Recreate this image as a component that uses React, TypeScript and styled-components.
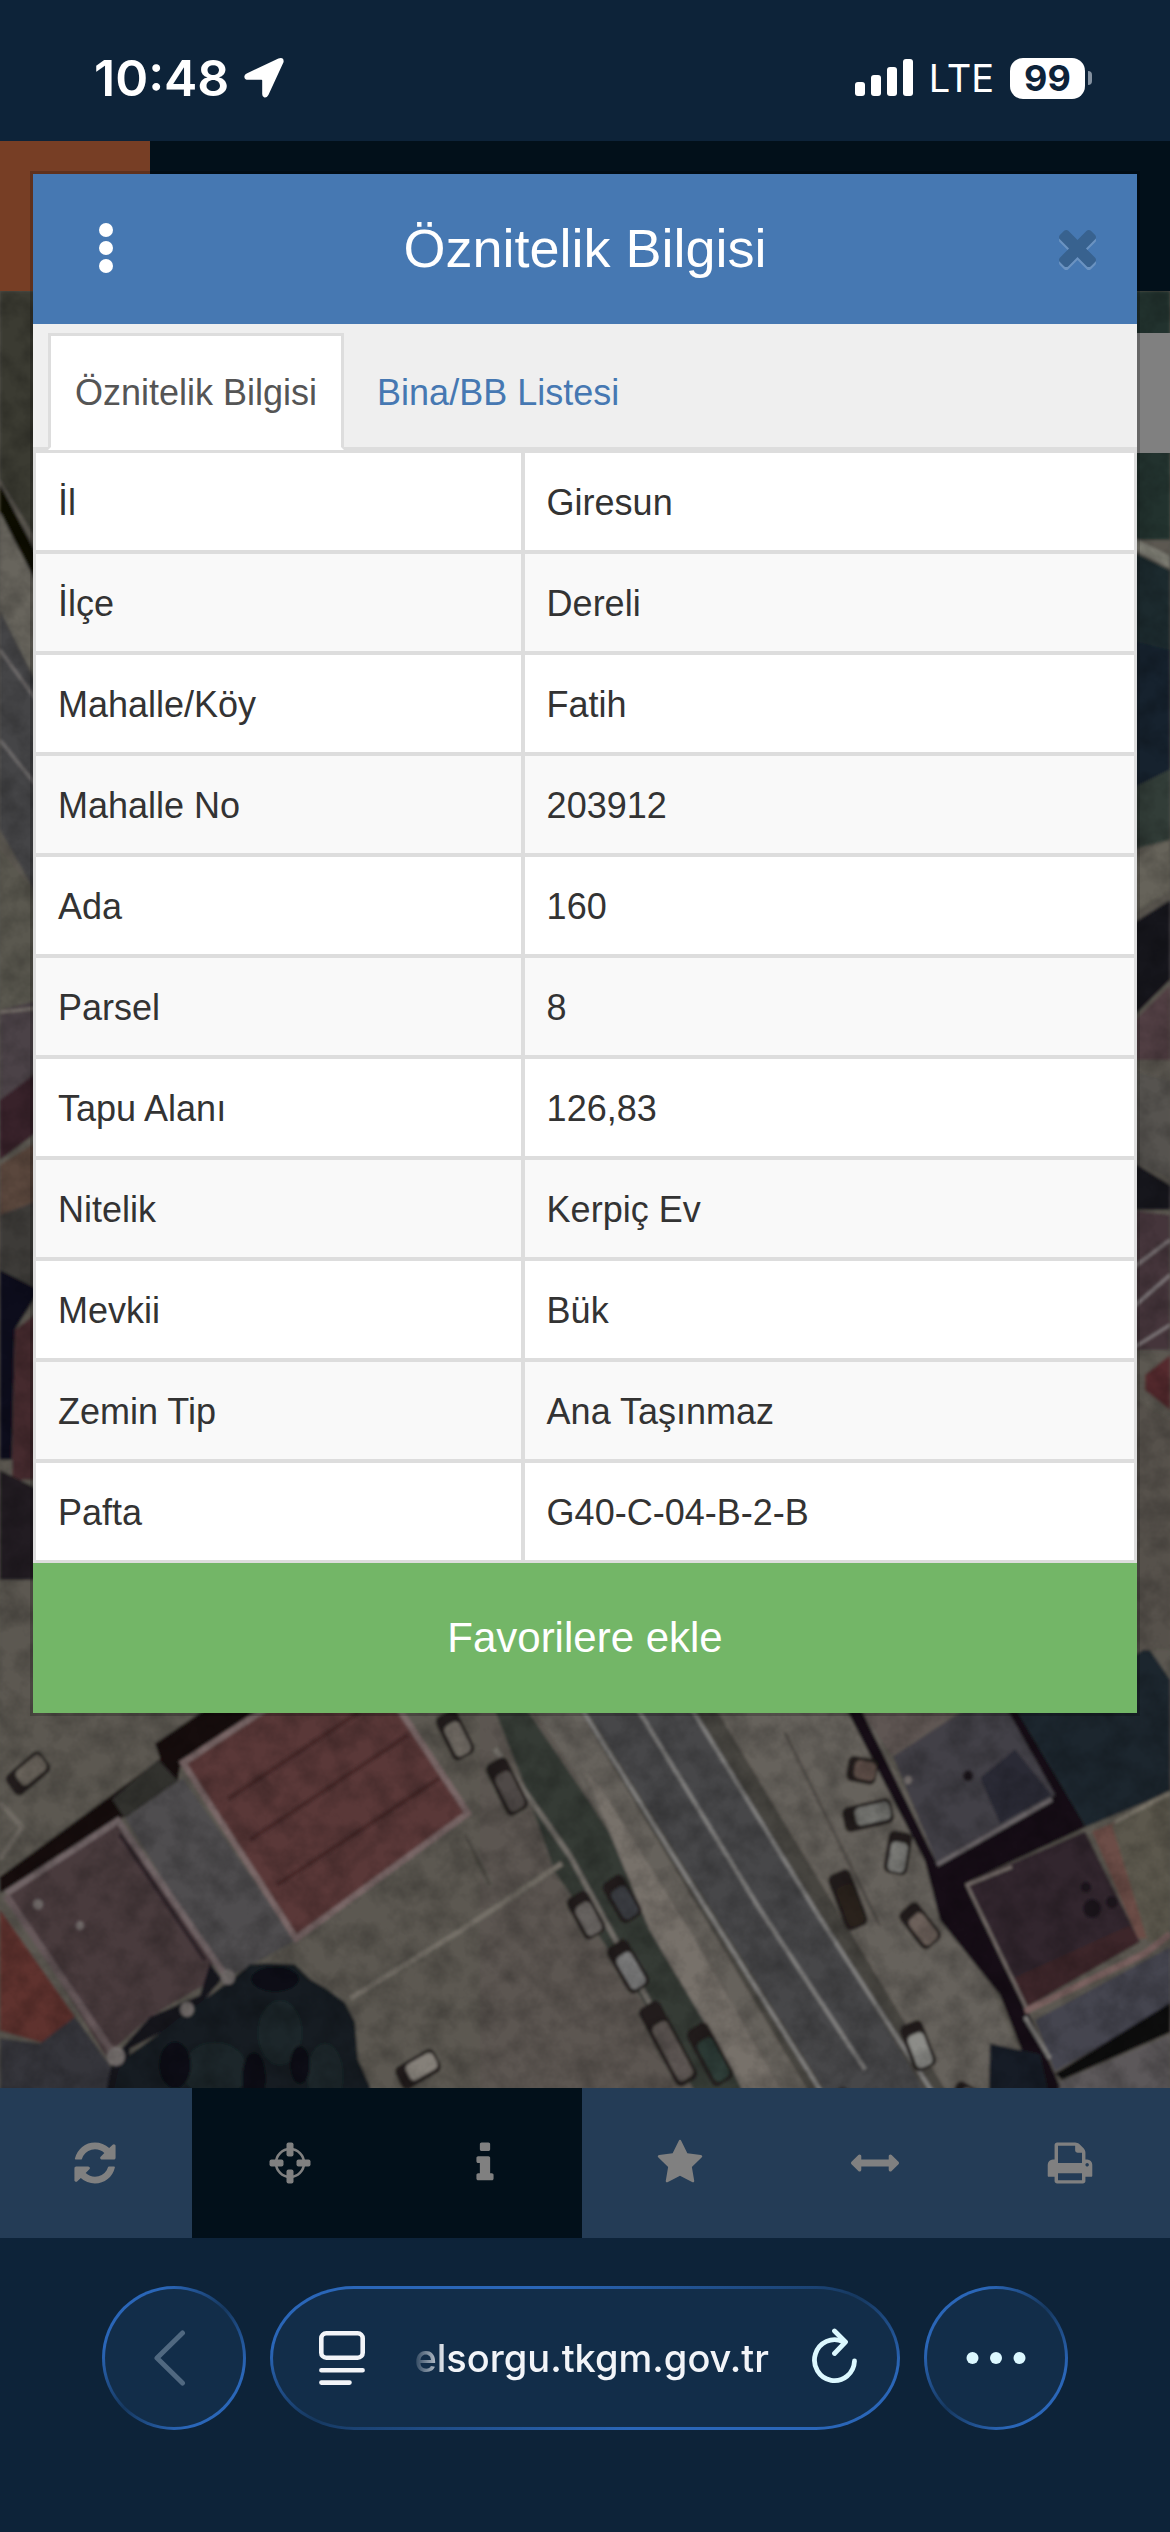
import React from "react";
import styled, { createGlobalStyle } from "styled-components";

const color = {
  chrome: "#0d2339",
  night: "#02101a",
  orange: "#773e25",
  header: "#4678b2",
  tabStrip: "#efefef",
  line: "#dddddd",
  text: "#333333",
  green: "#73b667",
  tool: "#243c56",
  glyph: "#808080",
  pill: "#122d49",
  rim: "#2a66b8",
  ice: "#dcf8ff",
};

const GlobalStyle = createGlobalStyle`
  *, *::before, *::after { box-sizing: border-box; }
  html, body { margin: 0; background: ${color.chrome}; }
  button { margin: 0; padding: 0; border: 0; background: none; font: inherit; color: inherit; cursor: pointer; }
  svg { display: block; }
`;

const Screen = styled.div`
  display: flex;
  flex-direction: column;
  min-height: 100vh;
  font-family: "Liberation Sans", Arial, sans-serif;
  color: ${color.text};
`;

/* ---------- status bar ---------- */

const StatusBar = styled.header`
  display: flex;
  justify-content: space-between;
  align-items: center;
  height: 141px;
  padding: 15px 78px 0 94px;
  background: ${color.chrome};
  color: #fff;
  font-family: Inter, sans-serif;
`;

const StatusGroup = styled.div<{ $gap: number }>`
  display: flex;
  align-items: center;
  gap: ${(p) => p.$gap}px;
`;

const Clock = styled.time`
  font-size: 50px;
  line-height: 60px;
  font-weight: 600;
`;

const Network = styled.span`
  font-size: 38px;
  line-height: 48px;
  font-weight: 400;
`;

const Battery = styled.div`
  display: flex;
  align-items: center;
  gap: 3px;
`;

const BatteryLevel = styled.span`
  width: 75px;
  height: 41px;
  border-radius: 13px;
  background: #fff;
  color: ${color.chrome};
  font-size: 36px;
  line-height: 41px;
  font-weight: 700;
  text-align: center;
`;

const BatteryTip = styled.span`
  width: 4px;
  height: 14px;
  border-radius: 0 4px 4px 0;
  background: #8491a0;
`;

/* ---------- page behind the dialog ---------- */

const Stage = styled.main`
  flex: 1;
  display: grid;
`;

const Backdrop = styled.div`
  grid-area: 1 / 1;
  display: flex;
  flex-direction: column;
  min-width: 0;
`;

const TopBar = styled.div`
  height: 150px;
  background: ${color.night};
`;

const MenuTile = styled.button`
  display: block;
  width: 150px;
  height: 150px;
  background: ${color.orange};
`;

const MapArea = styled.div`
  position: relative;
  flex: 1;
  overflow: hidden;
  background: #5a5650;

  > svg {
    position: absolute;
    inset: 0;
    width: 100%;
    height: 100%;
  }
`;

const SidePanel = styled.div`
  position: absolute;
  top: 42px;
  right: 0;
  width: 60px;
  height: 120px;
  background: #808080;
`;

const Toolbar = styled.nav`
  display: grid;
  grid-template-columns: repeat(6, 1fr);
  height: 150px;
  margin-left: -3px;
  padding-right: 3px;
  background: ${color.tool};
`;

const Tool = styled.button<{ $active?: boolean }>`
  display: grid;
  place-items: center;
  background: ${(p) => (p.$active ? color.night : color.tool)};
  color: ${color.glyph};
`;

/* ---------- dialog ---------- */

const DialogLayer = styled.div`
  grid-area: 1 / 1;
  z-index: 1;
  align-self: start;
  padding: 30px;
`;

const Dialog = styled.section`
  border: 3px solid rgba(0, 0, 0, 0.2);
  background: #fff;
  background-clip: padding-box;
`;

const DialogHeader = styled.div`
  display: grid;
  grid-template-columns: 1fr auto 1fr;
  align-items: center;
  height: 150px;
  padding: 0 12px 2px;
  background: ${color.header};
  color: #fff;
`;

const Title = styled.h1`
  margin: 0;
  font-size: 54px;
  line-height: 60px;
  font-weight: 400;
`;

const MenuButton = styled.button`
  display: grid;
  place-items: center;
  width: 122px;
  height: 96px;
`;

const CloseButton = styled.button`
  display: grid;
  place-items: center;
  justify-self: end;
  width: 96px;
  height: 96px;
  color: #38628f;

  svg {
    filter: drop-shadow(0 3px 0 rgba(255, 255, 255, 0.2));
  }
`;

const Tabs = styled.nav`
  display: flex;
  gap: 6px;
  height: 126px;
  padding: 9px 15px 0;
  background: linear-gradient(to top, ${color.line} 3px, ${color.tabStrip} 3px);
`;

const Tab = styled.a<{ $active?: boolean }>`
  height: 117px;
  padding: 0 24px;
  border: 3px solid ${(p) => (p.$active ? color.line : "transparent")};
  border-bottom-color: ${(p) => (p.$active ? "#fff" : "transparent")};
  background: ${(p) => (p.$active ? "#fff" : "transparent")};
  background-clip: padding-box;
  color: ${(p) => (p.$active ? "#555555" : color.header)};
  font-size: 36px;
  line-height: 114px;
  text-decoration: none;
`;

const Table = styled.table`
  width: 100%;
  border: 3px solid ${color.line};
  border-collapse: separate;
  border-spacing: 0;
  table-layout: fixed;
  font-size: 36px;
  line-height: 51px;
`;

const Row = styled.tr`
  background: #fff;

  &:nth-child(even) {
    background: #f9f9f9;
  }

  > * {
    padding: 24px 22px 22px;
    border-bottom: 4px solid ${color.line};
    text-align: left;
    font-weight: 400;
  }

  &:last-child > * {
    border-bottom: 0;
  }
`;

const Label = styled.th`
  width: 44.5%;
  border-right: 4px solid ${color.line};
`;

const Value = styled.td``;

const FavoriteButton = styled.button`
  display: block;
  width: 100%;
  height: 150px;
  background: ${color.green};
  color: #fff;
  font-size: 42px;
  line-height: 60px;
`;

/* ---------- browser bar ---------- */

const BrowserBar = styled.footer`
  display: flex;
  align-items: flex-start;
  gap: 24px;
  height: 294px;
  padding: 48px 102px 0;
  background: ${color.chrome};
`;

const rim = `
  border: 3px solid transparent;
  background:
    linear-gradient(${color.pill}, ${color.pill}) padding-box,
    linear-gradient(to bottom right, ${color.rim} 22%, #16385f 50%, ${color.rim} 78%) border-box;
`;

const RoundButton = styled.button`
  display: grid;
  place-items: center;
  flex: none;
  width: 144px;
  height: 144px;
  border-radius: 72px;
  && { ${rim} }
`;

const AddressBar = styled.div`
  flex: 1;
  min-width: 0;
  display: flex;
  align-items: center;
  height: 144px;
  padding: 0 39px 0 46px;
  border-radius: 84px / 72px;
  ${rim}
`;

const Address = styled.button`
  flex: 1;
  min-width: 0;
  margin-right: 43px;
  overflow: hidden;
  color: #f2f4f8;
  font-family: Inter, sans-serif;
  font-size: 38px;
  line-height: 54px;
  font-weight: 500;
  text-align: right;
  white-space: nowrap;
`;

const Faded = styled.span`
  display: inline-block;
  mask-image: linear-gradient(to right, rgba(0, 0, 0, 0.1), #000 32px);
`;

const IconButton = styled.button`
  flex: none;
`;

/* ---------- icons ---------- */

const Glyph = ({ d }: { d: string }) => (
  <svg width="48" height="48" viewBox="0 0 1792 1792" fill="currentColor" aria-hidden="true">
    <path d={d} />
  </svg>
);

const glyphs = {
  refresh:
    "M1639 1056q0 5-1 7-64 268-268 434.5t-478 166.5q-146 0-282.5-55t-243.5-157l-129 129q-19 19-45 19t-45-19-19-45v-448q0-26 19-45t45-19h448q26 0 45 19t19 45-19 45l-137 137q71 66 161 102t187 36q134 0 250-65t186-179q11-17 53-117 8-23 30-23h192q13 0 22.5 9.5t9.5 22.5zm25-800v448q0 26-19 45t-45 19h-448q-26 0-45-19t-19-45 19-45l138-138q-148-137-349-137-134 0-250 65t-186 179q-11 17-53 117-8 23-30 23h-199q-13 0-22.5-9.5t-9.5-22.5v-7q65-268 270-434.5t480-166.5q146 0 284 55.5t245 156.5l130-129q19-19 45-19t45 19 19 45z",
  info: "M1216 1344v128q0 26-19 45t-45 19h-512q-26 0-45-19t-19-45v-128q0-26 19-45t45-19h64v-384h-64q-26 0-45-19t-19-45v-128q0-26 19-45t45-19h384q26 0 45 19t19 45v576h64q26 0 45 19t19 45zm-128-1152v192q0 26-19 45t-45 19h-256q-26 0-45-19t-19-45v-192q0-26 19-45t45-19h256q26 0 45 19t19 45z",
  star: "M1728 647q0 22-26 48l-363 354 86 500q1 7 1 20 0 21-10.5 35.5t-30.5 14.5q-19 0-40-12l-449-236-449 236q-22 12-40 12-21 0-31.5-14.5t-10.5-35.5q0-6 2-20l86-500-364-354q-25-27-25-48 0-37 56-46l502-73 225-455q19-41 49-41t49 41l225 455 502 73q56 9 56 46z",
  arrows:
    "M1792 896q0 26-19 45l-256 256q-19 19-45 19t-45-19-19-45v-128h-1024v128q0 26-19 45t-45 19-45-19l-256-256q-19-19-19-45t19-45l256-256q19-19 45-19t45 19 19 45v128h1024v-128q0-26 19-45t45-19 45 19l256 256q19 19 19 45z",
  print:
    "M448 1536h896v-256h-896v256zm0-640h896v-384h-160q-40 0-68-28t-28-68v-160h-640v640zm1152 64q0-26-19-45t-45-19-45 19-19 45 19 45 45 19 45-19 19-45zm128 0v416q0 13-9.5 22.5t-22.5 9.5h-224v160q0 40-28 68t-68 28h-960q-40 0-68-28t-28-68v-160h-224q-13 0-22.5-9.5t-9.5-22.5v-416q0-79 56.5-135.5t135.5-56.5h64v-544q0-40 28-68t68-28h672q40 0 88 20t76 48l152 152q28 28 48 76t20 88v256h64q79 0 135.5 56.5t56.5 135.5z",
};

const Crosshair = () => (
  <svg width="48" height="48" viewBox="0 0 48 48" aria-hidden="true">
    <circle cx="24" cy="24" r="14" fill="none" stroke="currentColor" strokeWidth="2.6" />
    <g fill="currentColor">
      <rect x="20.5" y="3.5" width="7" height="14" rx="2" />
      <rect x="20.5" y="30.5" width="7" height="14" rx="2" />
      <rect x="3.5" y="20.5" width="14" height="7" rx="2" />
      <rect x="30.5" y="20.5" width="14" height="7" rx="2" />
    </g>
  </svg>
);

const LocationArrow = () => (
  <svg width="40" height="40" viewBox="0 0 40 40" fill="#fff" aria-hidden="true">
    <path d="M34.4.5Q40-1.2 39.6 4L24.4 37Q22.4 40.300 20 39.300 18.200 38.500 18.200 36V22.500Q18.200 21.800 17.500 21.800H4Q.9 21.800.4 19.200 0 16.700 2.700 15.400Z" />
  </svg>
);

const Signal = () => (
  <svg width="58" height="38" viewBox="0 0 58 38" fill="#fff" aria-hidden="true">
    <rect x="0" y="23" width="10" height="14" rx="3" />
    <rect x="16" y="16" width="10" height="21" rx="3" />
    <rect x="32" y="8" width="10" height="29" rx="3" />
    <rect x="48" y="0" width="10" height="37" rx="3" />
  </svg>
);

const Kebab = () => (
  <svg width="14" height="50" viewBox="0 0 14 50" fill="#fff" aria-hidden="true">
    <circle cx="7" cy="7" r="7" />
    <circle cx="7" cy="25" r="7" />
    <circle cx="7" cy="43" r="7" />
  </svg>
);

const Cross = () => (
  <svg width="37" height="37" viewBox="110 366 1188 1188" fill="currentColor" aria-hidden="true">
    <path d="M1298 1322q0 40-28 68l-136 136q-28 28-68 28t-68-28l-294-294-294 294q-28 28-68 28t-68-28l-136-136q-28-28-28-68t28-68l294-294-294-294q-28-28-28-68t28-68l136-136q28-28 68-28t68 28l294 294 294-294q28-28 68-28t68 28l136 136q28 28 28 68t-28 68l-294 294 294 294q28 28 28 68z" />
  </svg>
);

const Back = () => (
  <svg width="40" height="60" viewBox="0 0 40 60" fill="none" stroke="#506880" strokeWidth="5" strokeLinecap="round" strokeLinejoin="round" aria-hidden="true">
    <path d="M28.500 5 3 30 28.500 55" />
  </svg>
);

const Reader = () => (
  <svg width="46" height="54" viewBox="0 0 46 54" fill="none" stroke="#f2f4f8" strokeLinecap="round" aria-hidden="true">
    <rect x="2.300" y="2.300" width="41.400" height="24.400" rx="5" strokeWidth="4.600" />
    <path d="M2.400 39.200H43.600M2.400 51.600H30.500" strokeWidth="4.600" />
  </svg>
);

const Reload = () => (
  <svg width="46" height="60" viewBox="0 0 46 60" fill="none" stroke={color.ice} strokeWidth="4.800" strokeLinecap="round" strokeLinejoin="round" aria-hidden="true">
    <path d="M42.500 33A20 20.500 0 1 1 31 13.600" />
    <path d="M22.500 3 33.500 14 22.500 25.500" />
  </svg>
);

const More = () => (
  <svg width="60" height="14" viewBox="0 0 60 14" fill={color.ice} aria-hidden="true">
    <circle cx="6.500" cy="7" r="6" />
    <circle cx="30" cy="7" r="6" />
    <circle cx="53.500" cy="7" r="6" />
  </svg>
);

/* ---------- aerial photo ---------- */

type Shape = [fill: string, points: string];

/* the narrow strips left and right of the dialog */
const margins: Shape[] = [
  ["#3b3a33", "0,291 40,291 40,545 0,480"],
  ["#68655d", "0,500 40,575 40,690 0,610"],
  ["#0d0a06", "0,484 40,560 40,590 0,512"],
  ["#454547", "0,610 40,690 40,900 0,830"],
  ["#5a5850", "0,850 40,900 40,1010 0,1010"],
  ["#4c4246", "0,1010 40,1000 40,1080 0,1100"],
  ["#38242c", "0,1100 40,1070 40,1130 0,1160"],
  ["#5a463c", "0,1165 40,1140 40,1200 0,1215"],
  ["#3e3b38", "0,1215 40,1200 40,1290 0,1280"],
  ["#10101a", "0,1270 40,1290 15,1330 12,1460 0,1460"],
  ["#44292d", "15,1330 40,1310 40,1480 12,1480"],
  ["#221f22", "0,1470 40,1490 40,1580 0,1580"],
  ["#22302f", "1130,291 1170,291 1170,540 1130,540"],
  ["#7c7b72", "1130,536 1170,556 1170,568 1130,548"],
  ["#1d2c2d", "1130,550 1170,570 1170,700 1130,700"],
  ["#18242e", "1130,640 1170,650 1170,770 1130,790"],
  ["#303e38", "1130,790 1170,770 1170,840 1130,850"],
  ["#66645a", "1130,860 1170,840 1170,890 1130,915"],
  ["#12121f", "1130,925 1170,900 1170,980 1130,1020"],
  ["#523f45", "1130,1025 1170,985 1170,1060 1130,1060"],
  ["#57534f", "1130,1070 1170,1080 1170,1180 1130,1160"],
  ["#12131e", "1130,1160 1170,1185 1170,1210 1130,1210"],
  ["#44353b", "1130,1210 1170,1215 1170,1350 1130,1350"],
  ["#552a2e", "1145,1375 1170,1355 1170,1410 1145,1390"],
  ["#56514b", "1130,1395 1170,1420 1170,1650 1130,1650"],
];

const surfaces: Shape[] = [
  /* courtyard roofs */
  ["#150e0d", "0,1854 160,1745 155,1730 215,1692 275,1692 180,1752 178,1765 118,1802 0,1870"],
  ["#32302f", "112,1782 158,1745 178,1765 125,1800"],
  ["#5a3838", "183,1748 268,1692 395,1692 468,1795 296,1912"],
  ["#4f4e4f", "125,1800 183,1762 296,1914 225,1950"],
  ["#4a3a3d", "6,1870 118,1800 215,1930 205,1955 150,1985 106,2022"],
  ["#5e302e", "0,1885 75,1985 45,2010 0,1998"],
  ["#34343a", "0,2005 40,2010 75,1985 110,2030 108,2088 0,2088"],
  ["#12121f", "210,1935 222,1950 190,1985 130,2015 120,2088 100,2088 112,2025 150,1985 200,1965"],
  ["#161b21", "105,2088 118,2035 130,2020 160,2000 190,1978 210,1965 235,1948 250,1936 265,1935 295,1936 310,1950 325,1958 345,1972 355,1990 358,2025 370,2050 372,2088"],
  /* road */
  ["#66625c", "530,1692 860,1692 935,1830 1050,2088 560,2088 540,1900"],
  ["#5b5751", "480,1692 530,1692 800,2088 480,2088"],
  ["#46443f", "575,1692 712,1692 968,2088 830,2088"],
  ["#464648", "582,1692 690,1692 935,2070 945,2088 848,2088"],
  ["#363a36", "492,1692 522,1692 590,1785 720,1975 765,2088 715,2088 640,1965 555,1850 525,1770"],
  ["#77716a", "585,1757 600,1770 690,1905 785,2060 785,2088 760,2088 730,2030 650,1905"],
  /* right block */
  ["#5e5653", "855,1692 975,1692 893,1742"],
  ["#120f17", "843,1692 858,1692 937,1842 1055,1778 1003,1692 1020,1692 1086,1808 967,1860 1027,1978 1060,2050 1050,2088 1040,2060 1000,1965 940,1895 925,1840"],
  ["#424046", "893,1742 975,1692 1003,1692 1055,1778 937,1842"],
  ["#292934", "980,1762 1015,1735 1052,1778 1000,1805"],
  ["#1d272e", "1012,1692 1130,1650 1148,1640 1170,1670 1170,1775 1086,1808"],
  ["#33262d", "967,1860 1085,1812 1140,1915 1027,1976"],
  ["#3d262b", "1012,1950 1130,1900 1140,1915 1027,1976"],
  ["#6c4d47", "1092,1812 1125,1800 1148,1912 1138,1912"],
  ["#5c584e", "1112,1806 1170,1776 1170,1915 1148,1915"],
  ["#454550", "1035,1988 1170,1920 1170,1975 1055,2036"],
  ["#0e0c10", "1055,2038 1170,1972 1170,2000 1062,2044"],
  ["#5b585a", "1060,2046 1170,2002 1170,2088 1055,2088"],
  ["#151a26", "990,2010 1040,2020 1056,2088 988,2088"],
];

type Stroke = [color: string, width: number, points: string];

const marginLines: Stroke[] = [
  ["#6f6c6c", 3, "0,650 40,705"],
  ["#6f6c6c", 3, "0,740 40,790"],
  ["#76706a", 3, "0,1012 40,1008"],
  ["#7c7477", 3, "1130,1270 1170,1240"],
  ["#7c7477", 3, "1130,1310 1170,1275"],
  ["#7c7477", 3, "1130,1350 1170,1325"],
];

const outlines: Stroke[] = [
  ["#7a6867", 6, "268,1696 183,1748 296,1912 468,1795 395,1692"],
  ["#482a2b", 5, "228,1782 360,1700"],
  ["#482a2b", 5, "250,1820 408,1722"],
  ["#482a2b", 5, "277,1862 440,1762"],
  ["#716566", 6, "6,1870 118,1802 228,1950"],
  ["#66595a", 7, "6,1872 115,2022"],
  ["#2c2226", 4, "120,1815 205,1932"],
  ["#756f67", 5, "350,1968 460,1905 562,1842"],
  ["#706b64", 5, "0,1785 22,1808 0,1838"],
  ["#716d67", 5, "495,1735 570,1835 660,1990"],
  ["#7e7d7c", 4, "582,1698 690,1860 822,2056 842,2088"],
  ["#7e7d7c", 4, "634,1692 760,1885 865,2034"],
  ["#7e7d7c", 4, "688,1692 820,1893 955,2088"],
  ["#78706c", 3, "1027,1978 967,1862 1012,1845"],
  ["#7b6261", 6, "1025,1980 1145,1926 1170,1908"],
  ["#807e7c", 4, "1025,1985 1050,2024"],
  ["#6b6567", 4, "937,1843 1052,1782"],
  ["#7b766b", 4, "1115,1803 1170,1776"],
  ["#504c46", 3, "785,1720 880,1900"],
  ["#4a4641", 3, "465,1815 490,1862"],
];

type Car = [x: number, y: number, length: number, angle: number, roof: string];

const cars: Car[] = [
  [28, 1758, 44, -38, "#67625a"],
  [455, 1722, 46, 62, "#6f6a63"],
  [507, 1770, 54, 62, "#4f4a46"],
  [418, 2034, 44, -28, "#858079"],
  [586, 1890, 44, 60, "#66625f"],
  [628, 1938, 50, 58, "#7a7a7a"],
  [622, 1875, 44, 58, "#3a3d42"],
  [668, 2010, 84, 60, "#5d5752"],
  [710, 2020, 60, 60, "#2f3e39"],
  [868, 1797, 50, -12, "#757571"],
  [898, 1832, 40, 100, "#7b7c78"],
  [848, 1876, 56, 68, "#2a211d"],
  [920, 1900, 44, 50, "#6c605a"],
  [918, 2012, 46, 68, "#8c8c88"],
  [845, 2074, 44, 62, "#7b7774"],
  [968, 2062, 34, 30, "#77777a"],
  [862, 1755, 30, 10, "#5e5048"],
];

const Polygons = ({ items }: { items: Shape[] }) => (
  <>
    {items.map(([fill, points], i) => (
      <polygon key={i} fill={fill} points={points} />
    ))}
  </>
);

const Lines = ({ items }: { items: Stroke[] }) => (
  <g fill="none">
    {items.map(([stroke, width, points], i) => (
      <polyline key={i} stroke={stroke} strokeWidth={width} points={points} />
    ))}
  </g>
);

const AerialPhoto = () => (
  <svg viewBox="0 291 1170 1797" preserveAspectRatio="xMidYMax slice" aria-hidden="true">
    <defs>
      <filter id="lens" x="0" y="0" width="100%" height="100%">
        <feGaussianBlur stdDeviation="1.600" />
      </filter>
      <filter id="soil" x="0" y="0" width="100%" height="100%">
        <feTurbulence type="fractalNoise" baseFrequency="0.04" numOctaves="4" seed="7" />
        <feColorMatrix values="0 0 0 0 0  0 0 0 0 0  0 0 0 0 0  1.400 0 0 0 -0.500" />
      </filter>
    </defs>
    <g filter="url(#lens)">
      <rect y="291" width="1170" height="1797" fill="#5c5851" />
      <g transform="translate(0 -110) scale(1 1.0714)">
        <Polygons items={surfaces} />
        <g fill="#1a2829">
          <ellipse cx="215" cy="2035" rx="32" ry="26" />
          <ellipse cx="280" cy="2000" rx="22" ry="30" />
          <ellipse cx="230" cy="2078" rx="30" ry="18" />
          <ellipse cx="325" cy="2040" rx="18" ry="30" />
        </g>
        <g fill="#0d1016">
          <ellipse cx="175" cy="2030" rx="16" ry="22" />
          <ellipse cx="254" cy="2042" rx="12" ry="24" />
          <ellipse cx="275" cy="1950" rx="24" ry="12" />
          <ellipse cx="300" cy="2030" rx="10" ry="18" />
        </g>
        <Lines items={outlines} />
        {cars.map(([x, y, length, angle, roof], i) => (
          <g key={i} transform={`translate(${x} ${y}) rotate(${angle})`}>
            <rect x={-length / 2} y="-12" width={length} height="24" rx="6" fill="#241f1b" />
            <rect x={-length / 4} y="-9" width={length * 0.7} height="17" rx="5" fill={roof} />
          </g>
        ))}
        <g fill="#726c6b">
          <circle cx="187" cy="1978" r="7" />
          <circle cx="228" cy="1948" r="7" />
          <circle cx="116" cy="2022" r="9" />
          <circle cx="80" cy="1900" r="4" />
          <circle cx="38" cy="1880" r="5" />
          <circle cx="908" cy="1764" r="4" />
        </g>
        <g fill="#1c141b">
          <circle cx="1086" cy="1864" r="5" />
          <circle cx="1092" cy="1884" r="9" />
          <circle cx="1112" cy="1878" r="6" />
          <circle cx="968" cy="1760" r="5" />
        </g>
      </g>
      <Polygons items={margins} />
      <Lines items={marginLines} />
    </g>
    <rect y="291" width="1170" height="1797" filter="url(#soil)" opacity="0.3" />
  </svg>
);

/* ---------- screen ---------- */

const attributes: [string, string][] = [
  ["İl", "Giresun"],
  ["İlçe", "Dereli"],
  ["Mahalle/Köy", "Fatih"],
  ["Mahalle No", "203912"],
  ["Ada", "160"],
  ["Parsel", "8"],
  ["Tapu Alanı", "126,83"],
  ["Nitelik", "Kerpiç Ev"],
  ["Mevkii", "Bük"],
  ["Zemin Tip", "Ana Taşınmaz"],
  ["Pafta", "G40-C-04-B-2-B"],
];

export default function App() {
  return (
    <Screen lang="tr">
      <GlobalStyle />
      <StatusBar>
        <StatusGroup $gap={15}>
          <Clock>10:48</Clock>
          <LocationArrow />
        </StatusGroup>
        <StatusGroup $gap={16}>
          <Signal />
          <Network>LTE</Network>
          <Battery>
            <BatteryLevel>99</BatteryLevel>
            <BatteryTip />
          </Battery>
        </StatusGroup>
      </StatusBar>

      <Stage>
        <Backdrop>
          <TopBar>
            <MenuTile aria-label="Menü" />
          </TopBar>
          <MapArea>
            <AerialPhoto />
            <SidePanel />
          </MapArea>
          <Toolbar>
            <Tool aria-label="Yenile"><Glyph d={glyphs.refresh} /></Tool>
            <Tool $active aria-label="Konum"><Crosshair /></Tool>
            <Tool $active aria-label="Bilgi"><Glyph d={glyphs.info} /></Tool>
            <Tool aria-label="Favoriler"><Glyph d={glyphs.star} /></Tool>
            <Tool aria-label="Ölçüm"><Glyph d={glyphs.arrows} /></Tool>
            <Tool aria-label="Yazdır"><Glyph d={glyphs.print} /></Tool>
          </Toolbar>
        </Backdrop>

        <DialogLayer>
          <Dialog role="dialog" aria-labelledby="dialog-title">
            <DialogHeader>
              <MenuButton aria-label="Seçenekler"><Kebab /></MenuButton>
              <Title id="dialog-title">Öznitelik Bilgisi</Title>
              <CloseButton aria-label="Kapat"><Cross /></CloseButton>
            </DialogHeader>
            <Tabs>
              <Tab href="#oznitelik" $active>Öznitelik Bilgisi</Tab>
              <Tab href="#bina">Bina/BB Listesi</Tab>
            </Tabs>
            <Table>
              <tbody>
                {attributes.map(([label, value]) => (
                  <Row key={label}>
                    <Label scope="row">{label}</Label>
                    <Value>{value}</Value>
                  </Row>
                ))}
              </tbody>
            </Table>
            <FavoriteButton>Favorilere ekle</FavoriteButton>
          </Dialog>
        </DialogLayer>
      </Stage>

      <BrowserBar>
        <RoundButton aria-label="Geri"><Back /></RoundButton>
        <AddressBar>
          <IconButton aria-label="Sayfa menüsü"><Reader /></IconButton>
          <Address><Faded>elsorgu.tkgm.gov.tr</Faded></Address>
          <IconButton aria-label="Yeniden yükle"><Reload /></IconButton>
        </AddressBar>
        <RoundButton aria-label="Daha fazla"><More /></RoundButton>
      </BrowserBar>
    </Screen>
  );
}
